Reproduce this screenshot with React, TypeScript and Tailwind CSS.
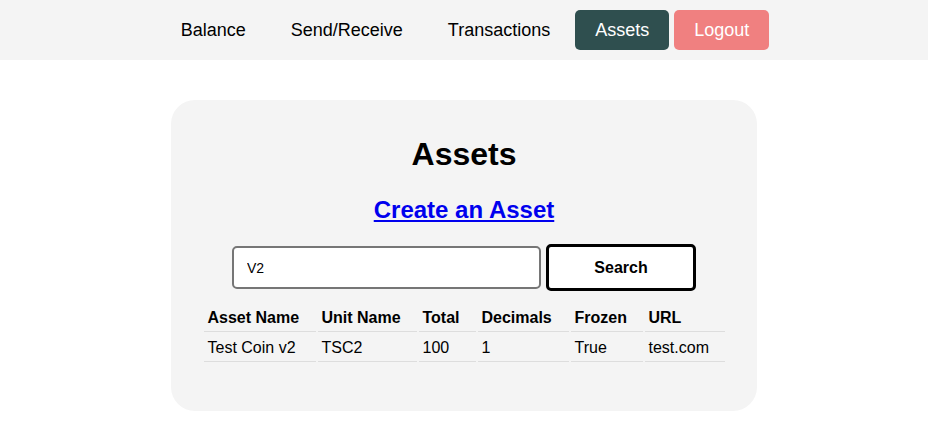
export default function App() {
  const links = ["Balance", "Send/Receive", "Transactions"];
  const headers = [
    { label: "Asset Name", w: "w-[112px]" },
    { label: "Unit Name", w: "w-[99px]" },
    { label: "Total", w: "w-[57px]" },
    { label: "Decimals", w: "w-[91px]" },
    { label: "Frozen", w: "w-[72px]" },
    { label: "URL", w: "w-[80px]" },
  ];
  const rows = [["Test Coin v2", "TSC2", "100", "1", "True", "test.com"]];

  return (
    <div className="min-h-screen bg-white font-['Liberation_Sans',Arial,sans-serif] text-black">
      <nav className="flex h-[60px] items-center justify-center gap-[5px] bg-[#f4f4f4] pl-[2px]">
        {links.map((l) => (
          <a key={l} className="flex h-[40px] items-center px-[20px] text-[18px]">
            {l}
          </a>
        ))}
        <a className="flex h-[40px] items-center rounded-[5px] bg-[#2f4f4f] px-[20px] text-[18px] text-white">
          Assets
        </a>
        <a className="flex h-[40px] items-center rounded-[5px] bg-[#f08080] px-[20px] text-[18px] text-white">
          Logout
        </a>
      </nav>

      <div className="mx-auto mt-[40px] flex h-[311px] w-[586px] flex-col items-center rounded-[24px] bg-[#f4f4f4] pt-[36px]">
        <h1 className="text-[32px] font-bold leading-[37px]">Assets</h1>
        <a className="mt-[23px] text-[24px] font-bold leading-[28px] text-[#0000ee] underline">
          Create an Asset
        </a>
        <div className="mt-[20px] flex items-center gap-[5px]">
          <input
            defaultValue="V2"
            className="h-[43px] w-[309px] rounded-[5px] border-2 border-[#767676] bg-white px-[13px] text-[14px] outline-none"
          />
          <button className="h-[47px] w-[150px] rounded-[5px] border-[3px] border-black bg-white text-[16px] font-bold">
            Search
          </button>
        </div>
        <table className="mt-[12px] w-[525px] table-fixed border-separate border-spacing-[2px] text-[16px]">
          <thead>
            <tr>
              {headers.map((h) => (
                <th key={h.label} className={`${h.w} border-b border-[#ddd] px-[4px] pt-[3px] pb-[4px] text-left font-bold leading-[19px]`}>
                  {h.label}
                </th>
              ))}
            </tr>
          </thead>
          <tbody>
            {rows.map((r, i) => (
              <tr key={i}>
                {r.map((c, j) => (
                  <td key={j} className="border-b border-[#ddd] px-[4px] py-[4px] leading-[19px]">
                    {c}
                  </td>
                ))}
              </tr>
            ))}
          </tbody>
        </table>
      </div>
    </div>
  );
}
